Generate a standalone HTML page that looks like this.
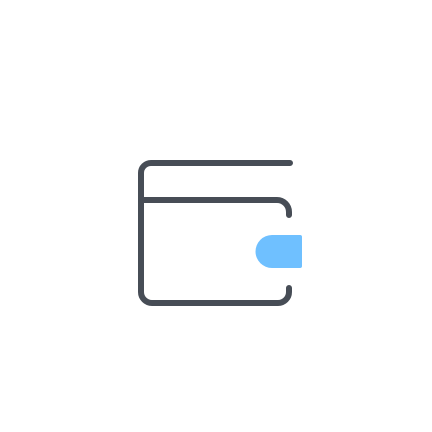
<!DOCTYPE html>
<html><head><style>html,body{margin:0;padding:0;background:#fff;width:432px;height:432px;overflow:hidden}</style></head>
<body>
<svg width="432" height="432" viewBox="0 0 432 432" xmlns="http://www.w3.org/2000/svg">
<g fill="none" stroke="#474d56" stroke-width="6" stroke-linecap="round" stroke-linejoin="round">
<path d="M290 163 H151 A10 10 0 0 0 141 173 V292 A11 11 0 0 0 152 303 H278 A11 11 0 0 0 289 292 V288"/>
<path d="M141 200 H277 A12 12 0 0 1 289 212 V215"/>
</g>
<path d="M272 235 H300 A2 2 0 0 1 302 237 V266 A2 2 0 0 1 300 268 H272 A16.5 16.5 0 0 1 272 235 Z" fill="#6fc0ff"/>
</svg>
</body></html>
